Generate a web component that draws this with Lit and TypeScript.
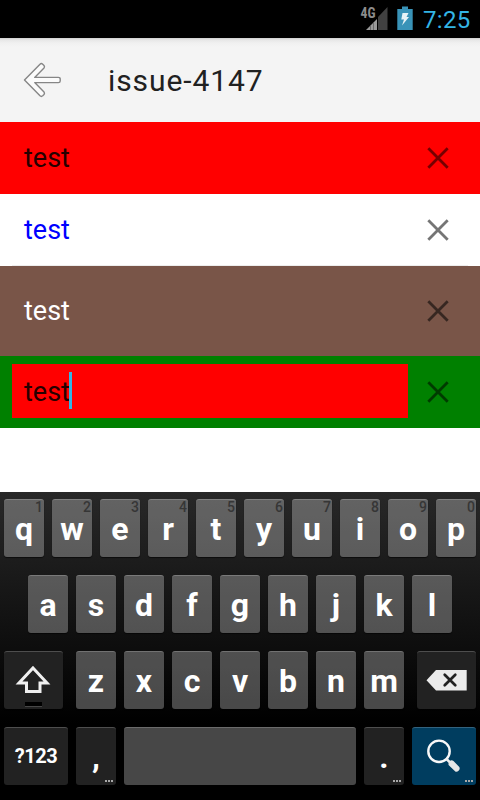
import { LitElement, html, css, nothing } from "lit";
import { customElement, property } from "lit/decorators.js";

const crossIcon = html`<svg class="cross" width="24" height="24" viewBox="0 0 24 24">
  <path d="M2.300 2.300L21.700 21.700M21.700 2.300L2.300 21.700" fill="none" stroke="#000" stroke-opacity=".54" stroke-width="2.8" />
</svg>`;

@customElement("status-bar")
class StatusBar extends LitElement {
  static styles = css`
    :host { display: flex; height: 38px; background: #000; justify-content: flex-end; box-sizing: border-box; padding-right: 10px; }
    .icons { display: block; flex: none; }
    .clock { font: 24px/38px Roboto, sans-serif; color: #33b5e5; letter-spacing: 0.3px; width: 47px; white-space: nowrap; padding-top: 1px; }
    .net { font: bold 14.5px "Roboto Condensed", Roboto, sans-serif; fill: #8c8c8c; }
  `;
  render() {
    return html`
      <svg class="icons" width="67" height="38" viewBox="356 0 67 38">
        <path d="M366 30L377 19V30Z" fill="#999" />
        <path d="M378 30V17L387.500 7V30Z" fill="#414141" />
        <path d="M370.500 25V30M373.500 22V30" stroke="#555" stroke-width=".7" />
        <text class="net" x="360.500" y="17.500" textLength="15" lengthAdjust="spacingAndGlyphs">4G</text>
        <path d="M397.300 9H402V6.500H408V9H412.700V30H397.300Z" fill="#3993b8" />
        <path d="M402.500 13H408.500L406.500 17H409L402 25.500L404 19.500H401.300Z" fill="#e8f3f7" />
      </svg>
      <div class="clock">7:25</div>
    `;
  }
}

@customElement("action-bar")
class ActionBar extends LitElement {
  static styles = css`
    :host { display: flex; height: 84px; padding-left: 20px; gap: 40px; background: linear-gradient(#cfcfcf 0, #e7e7e7 2px, #f0f0f0 5px, #f4f4f4 9px); }
    .back { margin-top: 20px; flex: none; }
    .title { font: 30px/86px Roboto, sans-serif; color: #212121; letter-spacing: 0.9px; }
  `;
  render() {
    return html`
      <svg class="back" width="48" height="44" viewBox="20 58 48 44">
        <path d="M24.500 80L40 64.200Q41.300 63 42.700 64.200L44 65.500Q45 66.800 44 68L34.700 77.400H58.300Q60.200 77.400 60.200 79V81Q60.200 82.600 58.300 82.600H34.700L44 92Q45 93.200 44 94.500L42.700 95.800Q41.300 97 40 95.800Z"
          fill="#fbfbfb" stroke="#868686" stroke-width="1.4" stroke-linejoin="round" />
      </svg>
      <div class="title">issue-4147</div>
    `;
  }
}

@customElement("search-row")
class SearchRow extends LitElement {
  @property({ reflect: true }) kind = "red";
  static styles = css`
    :host { display: flex; box-sizing: border-box; height: 72px; padding: 8px 30px 10px 12px; align-items: center; justify-content: space-between; font: 27px/54px Roboto, sans-serif; color: #250000; }
    :host([kind="red"]) { background: #f00; }
    :host([kind="white"]) { background: linear-gradient(#ededed, #ededed) 12px 71px / 456px 1px no-repeat #fff; color: #00f; }
    :host([kind="brown"]) { background: #795548; color: #fff; height: 90px; }
    :host([kind="green"]) { background: #008000; }
    .field { display: flex; align-items: center; width: 396px; height: 54px; box-sizing: border-box; padding-left: 12px; }
    :host([kind="green"]) .field { background: #f00; }
    .text { padding-top: 2px; width: 45px; white-space: nowrap; }
    .caret { width: 3px; height: 37px; margin-bottom: 1px; background: #33b5e5; }
    .cross { flex: none; position: relative; top: 1px; }
  `;
  render() {
    return html`<div class="field"><span class="text">test</span>${this.kind === "green" ? html`<span class="caret"></span>` : nothing}</div>${crossIcon}`;
  }
}

@customElement("soft-key")
class SoftKey extends LitElement {
  @property() label = "";
  @property() hint = "";
  @property({ reflect: true }) kind = "letter";
  @property({ reflect: true }) icon = "";
  static styles = css`
    :host { display: block; position: relative; box-sizing: border-box; width: 40px; height: 58px; border-radius: 3px; border-top: 1px solid rgba(255, 255, 255, 0.2); background: rgba(255, 255, 255, 0.28); box-shadow: 0 1px 1px rgba(0, 0, 0, 0.6); font: bold 32px/58px Roboto, sans-serif; color: #fff; text-align: center; }
    :host([kind="dark"]), :host([kind="mode"]) { background: #222; }
    :host([kind="mode"]) { width: 64px; font-size: 20px; line-height: 57px; letter-spacing: -0.5px; }
    :host([kind="space"]) { width: 232px; }
    :host([kind="search"]) { width: 64px; background: #003d5f; }
    :host([icon="shift"]), :host([icon="delete"]) { width: 59px; }
    .hint { position: absolute; top: -1px; right: 1px; font: 500 14px/17px Roboto, sans-serif; color: #363636; }
    .more { position: absolute; right: 3px; bottom: 3px; display: flex; gap: 1px; }
    .dot { width: 2px; height: 2px; background: #a8a8a8; }
    .art { display: block; margin-top: -1px; }
  `;
  art() {
    if (this.icon === "shift")
      return html`<svg class="art" width="59" height="58" viewBox="4 651 59 58">
        <path d="M33 668L47 683H40V691.500H26.500V683H19Z" fill="none" stroke="#f0f0f0" stroke-width="3" />
        <path d="M25 702H42V706H25Z" fill="#000" /><path d="M25 706.500H42" stroke="#484848" />
      </svg>`;
    if (this.icon === "delete")
      return html`<svg class="art" width="59" height="58" viewBox="417 651 59 58">
        <path d="M426.500 680.300L436 670H466.700V690.500H436Z" fill="#ebebeb" />
        <path d="M444.700 674.700L455.300 685.300M455.300 674.700L444.700 685.300" stroke="#222" stroke-width="2.700" stroke-linecap="round" />
      </svg>`;
    if (this.icon === "search")
      return html`<svg class="art" width="64" height="58" viewBox="412 727 64 58">
        <circle cx="439" cy="751.300" r="10.700" fill="none" stroke="#f8f8f8" stroke-width="2.400" />
        <path d="M446.500 759L451 763.500" stroke="#eee" stroke-width="2.500" />
        <path d="M450.500 760.500Q452 759.800 453.500 761L459.300 767Q460.300 768.800 458.800 770.500Q456.800 772.500 455.300 771.500L448.800 765.300Q448 763.800 449 762.500Z" fill="#e6e6e6" />
      </svg>`;
    return this.label;
  }
  render() {
    const more = this.icon === "search" || this.label === "," || this.label === ".";
    return html`${this.art()}
      ${this.hint ? html`<span class="hint">${this.hint}</span>` : nothing}
      ${more ? html`<span class="more"><i class="dot"></i><i class="dot"></i><i class="dot"></i></span>` : nothing}`;
  }
}

@customElement("soft-keyboard")
class SoftKeyboard extends LitElement {
  static styles = css`
    :host { display: flex; flex-direction: column; gap: 18px; box-sizing: border-box; height: 308px; padding-top: 7px; background: linear-gradient(#282828, #000 232px); }
    .row { display: flex; justify-content: center; gap: 8px; height: 58px; }
    .wide { justify-content: space-between; padding: 0 4px; }
    .group { display: flex; gap: 8px; margin-right: 2px; }
    .wide .group { margin: 0; }
  `;
  render() {
    const keys = (s: string) => [...s].map((c) => html`<soft-key label=${c}></soft-key>`);
    return html`
      <div class="row">${[..."qwertyuiop"].map((c, i) => html`<soft-key label=${c} hint=${String((i + 1) % 10)}></soft-key>`)}</div>
      <div class="row">${keys("asdfghjkl")}</div>
      <div class="row wide">
        <soft-key kind="dark" icon="shift"></soft-key>
        <div class="group">${keys("zxcvbnm")}</div>
        <soft-key kind="dark" icon="delete"></soft-key>
      </div>
      <div class="row">
        <soft-key kind="mode" label="?123"></soft-key>
        <soft-key kind="dark" label=","></soft-key>
        <soft-key kind="space"></soft-key>
        <soft-key kind="dark" label="."></soft-key>
        <soft-key kind="search" icon="search"></soft-key>
      </div>`;
  }
}

@customElement("app-root")
class AppRoot extends LitElement {
  static styles = css`
    :host { display: flex; flex-direction: column; width: 480px; height: 800px; background: #fff; overflow: hidden; }
    .list { flex: 1; }
  `;
  render() {
    return html`
      <status-bar></status-bar>
      <action-bar></action-bar>
      <div class="list">
        ${["red", "white", "brown", "green"].map((k) => html`<search-row kind=${k}></search-row>`)}
      </div>
      <soft-keyboard></soft-keyboard>`;
  }
}
